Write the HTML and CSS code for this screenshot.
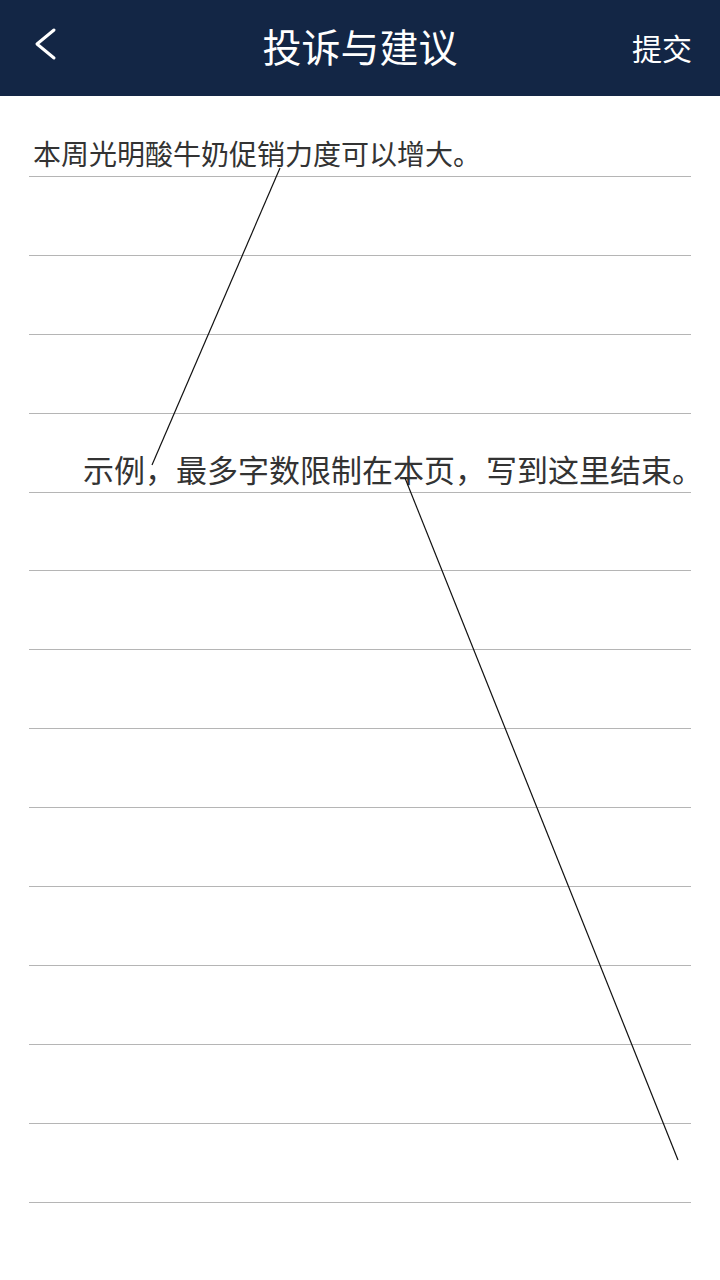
FILE: index.html
```html
<!DOCTYPE html>
<html lang="zh-CN">
<head>
<meta charset="utf-8">
<title>投诉与建议</title>
<link rel="stylesheet" href="styles.css">
</head>
<body>
<header class="topbar">
  <button class="back" aria-label="返回">
    <svg width="24" height="36" viewBox="0 0 24 36"><polyline points="20,4 3,18 20,32" fill="none" stroke="#fff" stroke-width="3" stroke-linecap="round" stroke-linejoin="round"/></svg>
  </button>
  <h1 class="title">投诉与建议</h1>
  <button class="submit">提交</button>
</header>
<main class="paper">
  <div class="rule"><span class="note">本周光明酸牛奶促销力度可以增大。</span></div>
  <div class="rule"></div>
  <div class="rule"></div>
  <div class="rule"></div>
  <div class="rule"><span class="example">示例，最多字数限制在本页，写到这里结束。</span></div>
  <div class="rule"></div>
  <div class="rule"></div>
  <div class="rule"></div>
  <div class="rule"></div>
  <div class="rule"></div>
  <div class="rule"></div>
  <div class="rule"></div>
  <div class="rule"></div>
  <div class="rule"></div>
  <svg class="marks" width="720" height="1280" viewBox="0 0 720 1280">
    <line x1="280" y1="168" x2="152" y2="465" stroke="#111" stroke-width="1.2"/>
    <line x1="405" y1="478" x2="678" y2="1160" stroke="#111" stroke-width="1.2"/>
  </svg>
</main>
</body>
</html>
```
FILE: styles.css
```css
html, body {
  margin: 0;
  padding: 0;
  background: #fff;
}
body {
  width: 720px;
  height: 1280px;
  overflow: hidden;
  position: relative;
  font-family: "Noto Sans CJK SC", "Noto Sans", sans-serif;
}
.topbar {
  height: 96px;
  background: #132645;
  display: flex;
  align-items: center;
  justify-content: space-between;
  padding: 0 28px 0 34px;
  box-sizing: border-box;
  color: #fff;
  position: relative;
}
.back {
  background: none;
  border: 0;
  padding: 0;
  width: 30px;
  height: 36px;
  display: flex;
  align-items: center;
  margin-top: -8px;
}
.title {
  margin: -6px 0 0;
  font-size: 39px;
  font-weight: 400;
  line-height: 1;
  position: absolute;
  left: 0;
  right: 0;
  text-align: center;
  pointer-events: none;
}
.submit {
  background: none;
  border: 0;
  padding: 0;
  color: #fff;
  font-family: inherit;
  font-size: 30px;
  line-height: 1;
  margin-top: -2px;
}
.paper {
  margin: 0 29px;
  padding-top: 2px;
}
.rule {
  height: 78.92px;
  box-sizing: border-box;
  border-bottom: 1px solid #b5b5b5;
  display: flex;
  align-items: flex-end;
  white-space: nowrap;
}
.note {
  font-size: 28px;
  line-height: 28px;
  color: #333;
  padding: 0 0 9px 4px;
}
.example {
  font-size: 31px;
  line-height: 31px;
  color: #333;
  padding: 0 0 8px 54px;
}
.marks {
  position: absolute;
  left: 0;
  top: 0;
  pointer-events: none;
}
```
